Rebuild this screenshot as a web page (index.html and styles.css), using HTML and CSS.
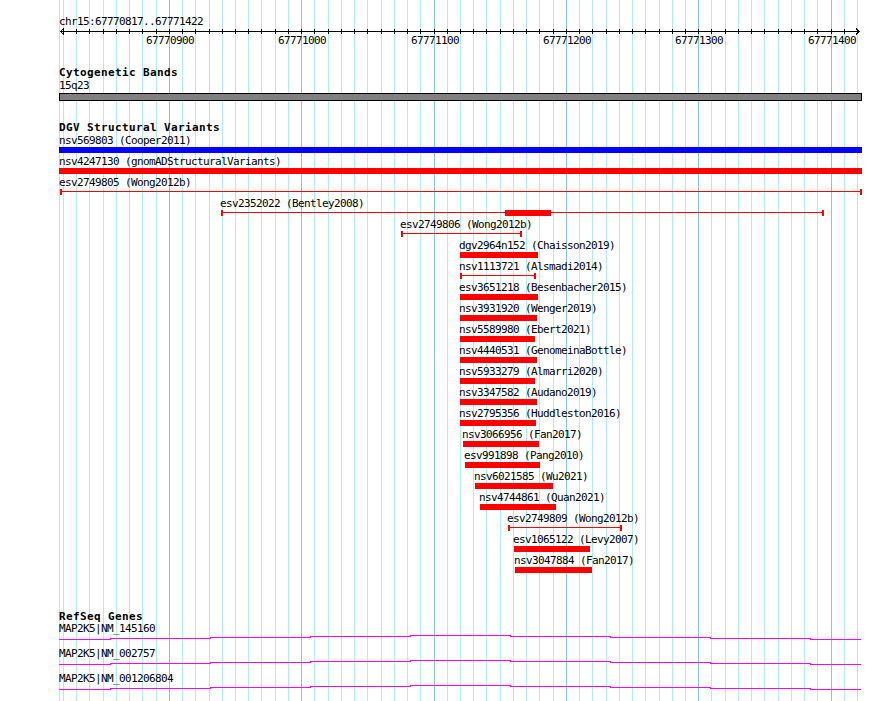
FILE: index.html
```html
<!DOCTYPE html>
<html lang="en">
<head>
    <meta charset="UTF-8">
    <meta name="viewport" content="width=device-width, initial-scale=1.0">
    <title>chr15:67770817..67771422</title>
    <link rel="stylesheet" href="styles.css">
</head>
<body>
<div class="browser">
    <!-- grid lines every 10bp, darker every 100bp -->
    <svg class="grid" width="890" height="701">
        <path class="grid-minor" d="M59.5 0V701M63.5 0V701M76.5 0V701M89.5 0V701M103.5 0V701M116.5 0V701M129.5 0V701M142.5 0V701M156.5 0V701M182.5 0V701M195.5 0V701M209.5 0V701M222.5 0V701M235.5 0V701M248.5 0V701M261.5 0V701M275.5 0V701M288.5 0V701M314.5 0V701M328.5 0V701M341.5 0V701M354.5 0V701M367.5 0V701M381.5 0V701M394.5 0V701M407.5 0V701M420.5 0V701M447.5 0V701M460.5 0V701M473.5 0V701M486.5 0V701M500.5 0V701M513.5 0V701M526.5 0V701M539.5 0V701M553.5 0V701M579.5 0V701M592.5 0V701M606.5 0V701M619.5 0V701M632.5 0V701M645.5 0V701M659.5 0V701M672.5 0V701M685.5 0V701M711.5 0V701M725.5 0V701M738.5 0V701M751.5 0V701M764.5 0V701M778.5 0V701M791.5 0V701M804.5 0V701M817.5 0V701M844.5 0V701M857.5 0V701"/>
        <path class="grid-major" d="M169.5 0V701M301.5 0V701M434.5 0V701M566.5 0V701M698.5 0V701M831.5 0V701"/>
    </svg>

    <section class="ruler">
        <div class="ruler-label">chr15:67770817..67771422</div>
        <svg class="scale" width="890" height="19">
            <path class="scale-line" d="M60 4.5H860M64 1.5L60.5 4.5L64 7.5M856 1.5L859.5 4.5L856 7.5"/>
            <path class="scale-line" d="M63.5 2V7M76.5 2V7M89.5 2V7M103.5 2V7M116.5 2V7M129.5 2V7M142.5 2V7M156.5 2V7M169.5 2V7M182.5 2V7M195.5 2V7M209.5 2V7M222.5 2V7M235.5 2V7M248.5 2V7M261.5 2V7M275.5 2V7M288.5 2V7M301.5 2V7M314.5 2V7M328.5 2V7M341.5 2V7M354.5 2V7M367.5 2V7M381.5 2V7M394.5 2V7M407.5 2V7M420.5 2V7M434.5 2V7M447.5 2V7M460.5 2V7M473.5 2V7M486.5 2V7M500.5 2V7M513.5 2V7M526.5 2V7M539.5 2V7M553.5 2V7M566.5 2V7M579.5 2V7M592.5 2V7M606.5 2V7M619.5 2V7M632.5 2V7M645.5 2V7M659.5 2V7M672.5 2V7M685.5 2V7M698.5 2V7M711.5 2V7M725.5 2V7M738.5 2V7M751.5 2V7M764.5 2V7M778.5 2V7M791.5 2V7M804.5 2V7M817.5 2V7M831.5 2V7M844.5 2V7M857.5 2V7"/>
            <text class="scale-text" x="170" y="17">67770900</text>
            <text class="scale-text" x="302" y="17">67771000</text>
            <text class="scale-text" x="435" y="17">67771100</text>
            <text class="scale-text" x="567" y="17">67771200</text>
            <text class="scale-text" x="699" y="17">67771300</text>
            <text class="scale-text" x="832" y="17">67771400</text>
        </svg>
    </section>

    <section class="track">
        <h2 class="track-title">Cytogenetic Bands</h2>
        <div class="feature">
            <div class="feature-label" style="margin-left:59px">15q23</div>
            <div class="band" style="margin-left:59px;width:803px"></div>
        </div>
    </section>

    <section class="track">
        <h2 class="track-title">DGV Structural Variants</h2>
        <div class="feature">
            <div class="feature-label" style="margin-left:59px">nsv569803 (Cooper2011)</div>
            <div class="lane"><span class="bar bar-blue" style="left:59px;width:803px"></span></div>
        </div>
        <div class="feature">
            <div class="feature-label" style="margin-left:59px">nsv4247130 (gnomADStructuralVariants)</div>
            <div class="lane"><span class="bar" style="left:59px;width:803px"></span></div>
        </div>
        <div class="feature">
            <div class="feature-label" style="margin-left:59px">esv2749805 (Wong2012b)</div>
            <div class="lane"><span class="span" style="left:60px;width:802px"></span></div>
        </div>
        <div class="feature">
            <div class="feature-label" style="margin-left:220px">esv2352022 (Bentley2008)</div>
            <div class="lane">
                <span class="span" style="left:221px;width:603px"></span>
                <span class="bar" style="left:505px;width:46px"></span>
            </div>
        </div>
        <div class="feature">
            <div class="feature-label" style="margin-left:400px">esv2749806 (Wong2012b)</div>
            <div class="lane"><span class="span" style="left:401px;width:121px"></span></div>
        </div>
        <div class="feature">
            <div class="feature-label" style="margin-left:459px">dgv2964n152 (Chaisson2019)</div>
            <div class="lane"><span class="bar" style="left:460px;width:78px"></span></div>
        </div>
        <div class="feature">
            <div class="feature-label" style="margin-left:459px">nsv1113721 (Alsmadi2014)</div>
            <div class="lane"><span class="span" style="left:460px;width:76px"></span></div>
        </div>
        <div class="feature">
            <div class="feature-label" style="margin-left:459px">esv3651218 (Besenbacher2015)</div>
            <div class="lane"><span class="bar" style="left:460px;width:78px"></span></div>
        </div>
        <div class="feature">
            <div class="feature-label" style="margin-left:459px">nsv3931920 (Wenger2019)</div>
            <div class="lane"><span class="bar" style="left:460px;width:77px"></span></div>
        </div>
        <div class="feature">
            <div class="feature-label" style="margin-left:459px">nsv5589980 (Ebert2021)</div>
            <div class="lane"><span class="bar" style="left:460px;width:75px"></span></div>
        </div>
        <div class="feature">
            <div class="feature-label" style="margin-left:459px">nsv4440531 (GenomeinaBottle)</div>
            <div class="lane"><span class="bar" style="left:460px;width:77px"></span></div>
        </div>
        <div class="feature">
            <div class="feature-label" style="margin-left:459px">nsv5933279 (Almarri2020)</div>
            <div class="lane"><span class="bar" style="left:460px;width:75px"></span></div>
        </div>
        <div class="feature">
            <div class="feature-label" style="margin-left:459px">nsv3347582 (Audano2019)</div>
            <div class="lane"><span class="bar" style="left:460px;width:77px"></span></div>
        </div>
        <div class="feature">
            <div class="feature-label" style="margin-left:459px">nsv2795356 (Huddleston2016)</div>
            <div class="lane"><span class="bar" style="left:460px;width:76px"></span></div>
        </div>
        <div class="feature">
            <div class="feature-label" style="margin-left:462px">nsv3066956 (Fan2017)</div>
            <div class="lane"><span class="bar" style="left:463px;width:76px"></span></div>
        </div>
        <div class="feature">
            <div class="feature-label" style="margin-left:464px">esv991898 (Pang2010)</div>
            <div class="lane"><span class="bar" style="left:465px;width:75px"></span></div>
        </div>
        <div class="feature">
            <div class="feature-label" style="margin-left:474px">nsv6021585 (Wu2021)</div>
            <div class="lane"><span class="bar" style="left:475px;width:78px"></span></div>
        </div>
        <div class="feature">
            <div class="feature-label" style="margin-left:479px">nsv4744861 (Quan2021)</div>
            <div class="lane"><span class="bar" style="left:480px;width:76px"></span></div>
        </div>
        <div class="feature">
            <div class="feature-label" style="margin-left:507px">esv2749809 (Wong2012b)</div>
            <div class="lane"><span class="span" style="left:508px;width:114px"></span></div>
        </div>
        <div class="feature">
            <div class="feature-label" style="margin-left:513px">esv1065122 (Levy2007)</div>
            <div class="lane"><span class="bar" style="left:514px;width:76px"></span></div>
        </div>
        <div class="feature">
            <div class="feature-label" style="margin-left:514px">nsv3047884 (Fan2017)</div>
            <div class="lane"><span class="bar" style="left:515px;width:77px"></span></div>
        </div>
    </section>

    <section class="track track-genes">
        <h2 class="track-title">RefSeq Genes</h2>
        <div class="gene">
            <div class="feature-label" style="margin-left:59px">MAP2K5|NM_145160</div>
            <svg class="intron" width="890" height="12"><path d="M59 4.5H110V3.5H210V2.5H310V1.5H410V0.5H510V1.5H610V2.5H710V3.5H810V4.5H861"/></svg>
        </div>
        <div class="gene">
            <div class="feature-label" style="margin-left:59px">MAP2K5|NM_002757</div>
            <svg class="intron" width="890" height="12"><path d="M59 4.5H110V3.5H210V2.5H310V1.5H410V0.5H510V1.5H610V2.5H710V3.5H810V4.5H861"/></svg>
        </div>
        <div class="gene">
            <div class="feature-label" style="margin-left:59px">MAP2K5|NM_001206804</div>
            <svg class="intron" width="890" height="12"><path d="M59 4.5H110V3.5H210V2.5H310V1.5H410V0.5H510V1.5H610V2.5H710V3.5H810V4.5H861"/></svg>
        </div>
    </section>
</div>
</body>
</html>
```

FILE: styles.css
```css
html, body
{
    margin: 0;
    padding: 0;
    background-color: white;
}

.browser
{
    position: relative;
    width: 890px;
    height: 701px;
    overflow: hidden;
    font-family: "DejaVu Sans Mono", monospace;
    font-size: 11px;
    letter-spacing: -0.62px;
    color: black;
}

.grid
{
    position: absolute;
    top: 0;
    left: 0;
}

.grid path
{
    fill: none;
    stroke-width: 1;
    shape-rendering: crispEdges;
}

.grid-minor
{
    stroke: #aeecf0;
}

.grid-major
{
    stroke: #7fc6ea;
}

.ruler, .track
{
    position: relative;
}

.ruler
{
    padding-top: 16px;
}

.ruler-label
{
    line-height: 11px;
    padding-left: 59px;
}

.scale
{
    display: block;
}

.scale-line
{
    fill: none;
    stroke: black;
    stroke-width: 1;
    shape-rendering: crispEdges;
}

.scale-text
{
    text-anchor: middle;
    fill: black;
}

.track
{
    margin-top: 20px;
}

.track-genes
{
    margin-top: 37px;
}

.track-title
{
    margin: 0;
    padding-left: 59px;
    font-size: 11px;
    font-weight: bold;
    letter-spacing: 0.38px;
    line-height: 13px;
}

.track-genes .track-title
{
    margin-bottom: -1px;
}

.feature
{
    margin-bottom: 2px;
}

.feature-label
{
    line-height: 13px;
    white-space: nowrap;
}

.band
{
    box-sizing: border-box;
    height: 8px;
    margin-top: 1px;
    border: 1px solid black;
    background-color: #808080;
}

.lane
{
    position: relative;
    height: 6px;
}

.bar
{
    position: absolute;
    top: 0;
    height: 6px;
    background-color: red;
}

.bar-blue
{
    background-color: blue;
}

.span
{
    position: absolute;
    top: 0;
    height: 6px;
    box-sizing: border-box;
    border-left: 2px solid red;
    border-right: 2px solid red;
}

.span::before
{
    content: "";
    position: absolute;
    left: 0;
    right: 0;
    top: 2px;
    height: 1px;
    background-color: red;
}

.gene
{
    height: 25px;
}

.intron
{
    display: block;
}

.intron path
{
    fill: none;
    stroke: magenta;
    stroke-width: 1;
    shape-rendering: crispEdges;
}
```
